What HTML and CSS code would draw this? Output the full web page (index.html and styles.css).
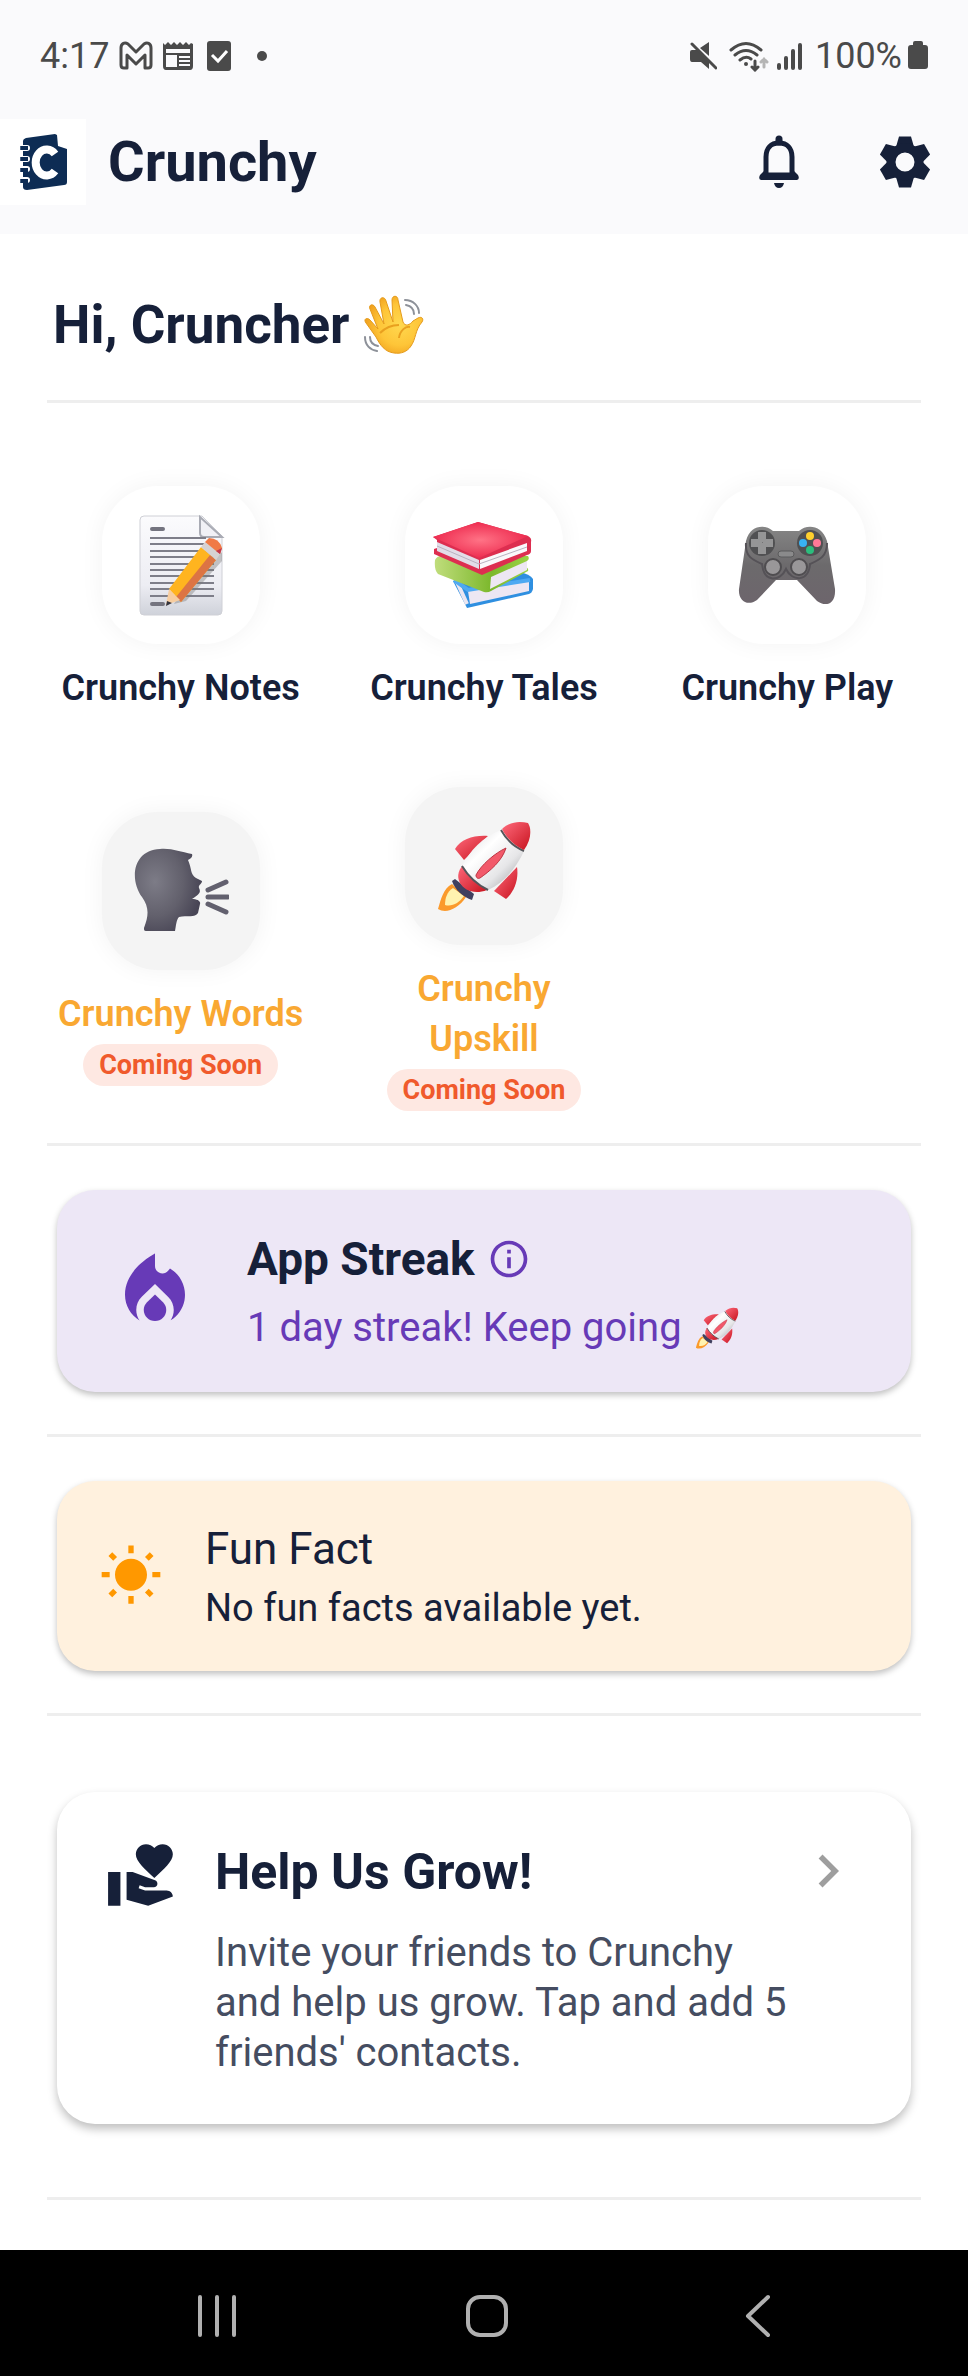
FILE: index.html
```
<!DOCTYPE html>
<html lang="en">

<head>
    <meta charset="UTF-8">
    <meta name="viewport" content="width=device-width, initial-scale=1.0">
    <title>Crunchy</title>
    <link rel="stylesheet" href="styles.css">
</head>

<body>
    <!-- shared drawings -->
    <svg class="defs" aria-hidden="true">
        <defs>
            <linearGradient id="body" x1="0" y1="0" x2="1" y2="1">
                <stop offset="0" stop-color="#d5d5d8" />
                <stop offset=".35" stop-color="#fff" />
                <stop offset=".65" stop-color="#e6e6e8" />
                <stop offset="1" stop-color="#8f9094" />
            </linearGradient>
            <linearGradient id="red" x1="0" y1="0" x2="1" y2="1">
                <stop offset="0" stop-color="#ff6a7c" />
                <stop offset="1" stop-color="#c8141f" />
            </linearGradient>
        </defs>
        <symbol id="rocket" viewBox="0 -3 96 96">
            <path d="M16 63c-9 5-11 15-14 25 8 5 20 0 28-12z" fill="#fb9a2c" />
            <path d="M17 67c-6 4-8 10-8 17 7 2 14-2 19-9z" fill="#fff3b0" />
            <path d="M16 60l3-2 19 15-2 6C27 76 19 69 16 60z" fill="#40405f" />
            <path d="M52 15C38 14 25 18 19 28l9 11z" fill="url(#red)" />
            <path d="M81 46c2 13-3 25-11 32L58 70z" fill="url(#red)" />
            <path d="M28 43c-8 8-6 15-4 19 4 7 14 12 27 7z" fill="url(#red)" />
            <path d="M65 9C46 16 34 30 26 45c6 10 14 18 26 24 17-8 28-22 36-39z" fill="url(#body)" />
            <path d="M26 45c6 10 14 18 26 24M65 9c5 9 13 17 23 21" fill="none" stroke="#55565b" stroke-width="2" />
            <path d="M66 8c9-8 18-8 26-6 4 6 3 18-4 27-9-4-17-11-22-21z" fill="url(#red)" />
            <path d="M70 27C59 32 45 44 40 54c0 3 2 4 4 3 10-7 22-17 26-30z" fill="#f2596a" stroke="#bd3442" />
        </symbol>
    </svg>

    <!-- status bar -->
    <div class="status">
        <div class="status-side">
            <span class="status-text">4:17</span>
            <svg width="34" height="32" viewBox="0 0 34 32" aria-hidden="true">
                <path d="M2 8c0-5 4-6 7-4l8 8 8-8c3-2 7-1 7 4v17q0 3-3 3h-3V15l-9 9-9-9v13H5q-3 0-3-3z" fill="none" stroke="#4a4a4a" stroke-width="3" stroke-linejoin="round" />
            </svg>
            <svg width="30" height="32" viewBox="0 0 30 32" aria-hidden="true">
                <path d="M0 3l2 2 3-3 3 3 3-3 3 3 3-3 3 3 3-3 3 3 2-2 2 1v22q0 4-3 4H3q-3 0-3-4z" fill="#4a4a4a" />
                <path d="M3 9h24v4H3zM3 15h11v12H3zM16 16h11v2H16zM16 20h11v2H16zM16 24h11v2H16z" fill="#fafafc" />
            </svg>
            <svg class="task" width="24" height="32" viewBox="0 0 24 32" aria-hidden="true">
                <rect y="1" width="24" height="30" rx="3" fill="#4a4a4a" />
                <path d="M5 15l6 6 9-10" fill="none" stroke="#fff" stroke-width="3" />
            </svg>
            <span class="dot"></span>
        </div>
        <div class="status-side right">
            <svg width="28" height="30" viewBox="0 0 28 30" aria-hidden="true">
                <path d="M1 11q0-2 2-2h5L20 20v8l-8-7H3q-2 0-2-3zM11 7l9-6v14z" fill="#4a4a4a" />
                <path d="M3 3l24 24" stroke="#4a4a4a" stroke-width="3" stroke-linecap="round" />
            </svg>
            <svg width="40" height="32" viewBox="0 0 40 32" aria-hidden="true">
                <g fill="none" stroke="#4a4a4a" stroke-width="3" stroke-linecap="round">
                    <path d="M2 10q15-13 30 0M6 15q11-9 22 0M11 20q6-5 11-1" />
                    <path d="M26 21v9m-3-3l3 3 3-3" />
                    <path d="M35 27v-8m-3 3l3-3 3 3" stroke="#b5b5b5" />
                </g>
                <circle cx="17" cy="24" r="2" fill="#4a4a4a" />
            </svg>
            <svg class="signal" width="26" height="28" viewBox="0 0 26 28" aria-hidden="true">
                <path d="M2 23v3M9 16v10M16 9v17M23 3v23" stroke="#4a4a4a" stroke-width="4" stroke-linecap="round" />
            </svg>
            <span class="status-text">100%</span>
            <svg class="battery" width="20" height="30" viewBox="0 0 20 30" aria-hidden="true">
                <path d="M5 2q0-2 2-2h6q2 0 2 2v2h2q3 0 3 3v18q0 3-3 3H3q-3 0-3-3V7q0-3 3-3h2z" fill="#4a4a4a" />
            </svg>
        </div>
    </div>

    <!-- app bar -->
    <header class="appbar">
        <svg class="logo" viewBox="0 0 86 86" role="img" aria-label="Crunchy logo">
            <path d="M23 22q0-2 3-3l29-4 2 1 1 11 9 3v33q0 3-3 3l-37 5q-4 0-4-3z" fill="#0d2c54" />
            <path d="M55 35a11 13 0 1 0 0 17" fill="none" stroke="#fff" stroke-width="8" />
            <g fill="none" stroke="#fff" stroke-width="6" stroke-linecap="round">
                <path d="M21 29h6M21 40h6M21 50h6M21 61h6" />
            </g>
            <g fill="none" stroke="#0d2c54" stroke-width="2" stroke-linecap="round">
                <path d="M21 28h6v2h-6M21 39h6v2h-6M21 50h6v2h-6M21 61h6v2h-6" />
            </g>
        </svg>
        <h1>Crunchy</h1>
        <button class="icon-btn" aria-label="Notifications">
            <svg width="52" height="54" viewBox="0 0 52 54">
                <path d="M13 40V22c0-9 5-14 13-14s13 5 13 14v18z" fill="none" stroke="#162039" stroke-width="5" />
                <path d="M26 4v3" stroke="#162039" stroke-width="7" stroke-linecap="round" />
                <path d="M11 36l-4 4q-2 4 1 5h36q3-1 1-5l-4-4v4H11z" fill="#162039" />
                <path d="M21 48h10q-1 5-5 5t-5-5z" fill="#162039" />
            </svg>
        </button>
        <button class="icon-btn" aria-label="Settings">
            <svg width="52" height="52" viewBox="-26 -26 52 52">
                <g fill="#162039">
                    <path id="tooth" d="M-9-15l3-10.500h12L9-15z" />
                    <use href="#tooth" transform="rotate(60)" />
                    <use href="#tooth" transform="rotate(120)" />
                    <use href="#tooth" transform="rotate(180)" />
                    <use href="#tooth" transform="rotate(240)" />
                    <use href="#tooth" transform="rotate(300)" />
                </g>
                <circle r="14" fill="none" stroke="#162039" stroke-width="9" />
            </svg>
        </button>
    </header>

    <main>
        <h2 class="greeting">Hi, Cruncher
            <svg width="62" height="62" viewBox="0 0 62 62" role="img" aria-label="waving hand">
                <defs>
                    <radialGradient id="hand" cx=".6" cy=".5" r=".6">
                        <stop offset="0" stop-color="#ffd84f" />
                        <stop offset=".6" stop-color="#fec538" />
                        <stop offset="1" stop-color="#f0a01e" />
                    </radialGradient>
                </defs>
                <path d="M31 59C22 58 17 51 13 43L3 29c-3-4 1-6 4-3l8 9L7 15c-2-4 3-6 5-2l9 17-4-22c-1-5 5-6 6-1l7 21-1-22c0-5 6-5 6 0l5 22c2 5 7 3 10-1l5-3c4-2 6 1 4 4-7 8-6 17-11 24-4 6-10 8-17 7z" fill="url(#hand)" stroke="#e59b1c" />
                <path d="M36 44c1-8 7-12 11-11M17 39c5-5 12-8 19-8" fill="none" stroke="#e9a01f" stroke-width="2" />
                <path d="M42 6c8 0 14 6 14 13M43 11c5 1 8 4 8 9M2 43c0 8 5 13 12 14M7 43c0 5 3 8 8 9" fill="none" stroke="#8d9199" stroke-width="2" stroke-linecap="round" />
            </svg>
        </h2>
        <hr>

        <!-- feature tiles -->
        <nav class="tiles" aria-label="Features">
            <a class="tile" href="#notes">
                <span class="tile-box">
                    <svg width="96" height="104" viewBox="-2 -1 96 104" aria-hidden="true">
                        <defs>
                            <linearGradient id="paper" x1="0" y1="0" x2="0" y2="1">
                                <stop offset="0" stop-color="#fbfbfd" />
                                <stop offset=".7" stop-color="#ededf3" />
                                <stop offset="1" stop-color="#cfd2da" />
                            </linearGradient>
                        </defs>
                        <path d="M9 2h58l20 20v75q0 4-4 4H9q-4 0-4-4V6q0-4 4-4z" fill="url(#paper)" stroke="#cfd0d6" />
                        <path d="M65 3v16q0 4 4 4h18z" fill="#f1f1f6" stroke="#a9abb4" stroke-width="2" />
                        <path d="M17 15h11M17 90h11" stroke="#74747f" stroke-width="4" stroke-linecap="round" />
                        <path d="M15 24h56M15 30h54M15 37h50M15 43h64M15 50h64M15 56h64M15 62h64M15 69h64M15 75h64M15 82h64" stroke="#7e7e89" stroke-width="2" />
                        <path d="M73 31l14 8v8L51 87l-12 3z" fill="#777" opacity=".4" />
                        <path d="M66 33l15 13-35 42-12-13z" fill="#ffb41f" />
                        <path d="M81 46L46 88l-5-5 34-42z" fill="#dc7444" />
                        <path d="M34 75l-3 16 14-5z" fill="#f7cda0" />
                        <path d="M32 87l-1 5 6-3z" fill="#34343e" />
                        <path d="M70 28l15 12-4 6-15-13z" fill="#d6d2d3" />
                        <path d="M74 24q10 0 13 10l-2 6-15-12z" fill="#f07a46" />
                        <path d="M87 34l-2 6-4-3z" fill="#c4374d" />
                    </svg>
                </span>
                <span class="tile-label">Crunchy Notes</span>
            </a>
            <a class="tile" href="#tales">
                <span class="tile-box">
                    <svg width="104" height="104" viewBox="0 -5 104 104" aria-hidden="true">
                        <defs>
                            <radialGradient id="cover">
                                <stop offset="0" stop-color="#ff7386" />
                                <stop offset="1" stop-color="#ee2c50" />
                            </radialGradient>
                            <linearGradient id="green">
                                <stop offset="0" stop-color="#c0dd7c" />
                                <stop offset=".6" stop-color="#7cb82c" />
                                <stop offset="1" stop-color="#9bd245" />
                            </linearGradient>
                        </defs>
                        <path d="M21 63l66-9q11 2 14 7v10q-1 4-4 5l-62 14z" fill="#2f8fe0" />
                        <path d="M36 73l61-10v10L38 86z" fill="#ede7f3" />
                        <path d="M25 64l10 22" stroke="#eae6f1" stroke-width="4" />
                        <path d="M22 62l14 10 62-10" fill="none" stroke="#4ea9f2" stroke-width="4" />
                        <path d="M3 42q2-4 6-4l87 0q2 3-1 5l-2 6q4 1 3 4L59 73q-3 2-7 1L6 56q-4-4-3-14z" fill="url(#green)" />
                        <path d="M59 59l36-16v9L58 71z" fill="#ede7f3" />
                        <path d="M1 19L46 4l50 14q4 2 3 6v9q0 3-4 4L50 57 2 36v-5l3-1v-8z" fill="#dd2e50" />
                        <path d="M5 24l42 18v9L5 33z" fill="#e2dce7" />
                        <path d="M48 42l47-17v8L48 51z" fill="#faf8fb" />
                        <path d="M5 28l42 18 48-17" fill="none" stroke="#b9b2c0" />
                        <path d="M1 19L46 4l50 14-49 22z" fill="url(#cover)" />
                    </svg>
                </span>
                <span class="tile-label">Crunchy Tales</span>
            </a>
            <a class="tile" href="#play">
                <span class="tile-box">
                    <svg width="100" height="84" viewBox="0 0 100 84" aria-hidden="true">
                        <defs>
                            <linearGradient id="pad" x1="0" y1="0" x2="0" y2="1">
                                <stop offset="0" stop-color="#858585" />
                                <stop offset=".5" stop-color="#6c6a6c" />
                                <stop offset="1" stop-color="#6d656c" />
                            </linearGradient>
                        </defs>
                        <path d="M9 18C13 2 28 1 36 8h26c8-7 23-6 28 10l8 48c1 16-10 18-18 12L60 57H39L20 77C10 84 1 77 2 66z" fill="url(#pad)" />
                        <path d="M9 20c-1 14 7 17 16 21 2 19 18 18 24 5 6 13 23 13 24-5 9-4 17-7 17-21" fill="none" stroke="#555257" stroke-width="2" />
                        <circle cx="25" cy="20" r="13" fill="#505052" />
                        <circle cx="73" cy="20" r="13" fill="#505052" />
                        <path d="M21 9h8v7l-4 4-4-4zM36 16v8h-7l-4-4 4-4zM29 31h-8v-7l4-4 4 4zM14 24v-8h7l4 4-4 4z" fill="#959596" />
                        <circle cx="73" cy="13" r="4" fill="#ffd02d" />
                        <circle cx="66" cy="20" r="4" fill="#38b2f2" />
                        <circle cx="80" cy="20" r="4" fill="#ff7998" />
                        <circle cx="73" cy="27" r="4" fill="#2cbd7d" />
                        <rect x="41" y="28" width="16" height="6" rx="3" fill="#8a8a8b" stroke="#5b5b5c" />
                        <circle cx="36" cy="44" r="8" fill="#999799" stroke="#4f4d50" stroke-width="2" />
                        <circle cx="62" cy="44" r="8" fill="#999799" stroke="#4f4d50" stroke-width="2" />
                    </svg>
                </span>
                <span class="tile-label">Crunchy Play</span>
            </a>
            <a class="tile soon" href="#words">
                <span class="tile-box">
                    <svg width="96" height="88" viewBox="0 0 96 88" aria-hidden="true">
                        <defs>
                            <radialGradient id="head" cx=".3" cy=".4" r=".7">
                                <stop offset="0" stop-color="#7d7c87" />
                                <stop offset=".6" stop-color="#62606c" />
                                <stop offset="1" stop-color="#484555" />
                            </radialGradient>
                        </defs>
                        <path d="M13 84c-2 0-2-1-2-3 5-13 5-21-2-31C-4 32 0 3 27 2c12-1 20 3 32 5 1 3-1 4-4 6 4 9 2 14 8 18l6 3c0 3-4 4-3 7 2 4 1 6-7 11 5 0 9 2 8 5l-2 9c-3 5-11 2-19 4-3 3-3 10-4 14z" fill="url(#head)" />
                        <path d="M75 43l18-8M75 50h20M75 57l18 8" stroke="#62606e" stroke-width="5" stroke-linecap="round" />
                    </svg>
                </span>
                <span class="tile-label">Crunchy Words</span>
                <span class="badge">Coming Soon</span>
            </a>
            <a class="tile soon" href="#upskill">
                <span class="tile-box">
                    <svg width="96" height="96" aria-hidden="true"><use href="#rocket" /></svg>
                </span>
                <span class="tile-label">Crunchy<br>Upskill</span>
                <span class="badge">Coming Soon</span>
            </a>
        </nav>
        <hr>

        <section class="card streak">
            <svg width="90" height="90" viewBox="0 0 24 24" fill="#673ab7" aria-hidden="true">
                <path d="M12 12.900l-2.130 2.090C9.310 15.550 9 16.280 9 17.060 9 18.680 10.350 20 12 20s3-1.320 3-2.940c0-.78-.31-1.520-.87-2.070L12 12.900z" />
                <path d="M16 6l-.44.55C14.380 8.020 12 7.190 12 5.300V2S4 6 4 13c0 2.920 1.560 5.470 3.890 6.860-.56-.79-.89-1.760-.89-2.800 0-1.320.52-2.560 1.470-3.500L12 10.100l3.530 3.470c.95.93 1.470 2.170 1.470 3.500 0 1.020-.31 1.960-.85 2.750 1.890-1.150 3.290-3.060 3.710-5.300.66-3.550-1.070-6.900-3.860-8.520z" />
            </svg>
            <div class="card-text">
                <h3>App Streak
                    <button class="info" aria-label="About the streak">
                        <svg width="44" height="44" viewBox="0 0 24 24" fill="#673ab7">
                            <path d="M11 7h2v2h-2zm0 4h2v6h-2zm1-9C6.480 2 2 6.480 2 12s4.480 10 10 10 10-4.480 10-10S17.520 2 12 2zm0 18c-4.410 0-8-3.590-8-8s3.590-8 8-8 8 3.590 8 8-3.590 8-8 8z" />
                        </svg>
                    </button>
                </h3>
                <p>1 day streak! Keep going
                    <svg width="46" height="44" role="img" aria-label="rocket"><use href="#rocket" /></svg>
                </p>
            </div>
        </section>
        <hr>

        <section class="card fact">
            <svg width="64" height="64" viewBox="0 0 24 24" fill="#ff9800" aria-hidden="true">
                <path d="M6.760 4.840l-1.800-1.790-1.410 1.410 1.790 1.790 1.420-1.410zM4 10.500H1v2h3v-2zm9-9.950h-2V3.500h2V.55zm7.450 3.910l-1.410-1.410-1.790 1.790 1.410 1.410 1.790-1.790zm-3.210 13.700l1.790 1.800 1.410-1.410-1.800-1.790-1.400 1.400zM20 10.500v2h3v-2h-3zm-8-5c-3.310 0-6 2.690-6 6s2.690 6 6 6 6-2.690 6-6-2.690-6-6-6zm-1 16.950h2V19.500h-2v2.950zm-7.450-3.910l1.410 1.410 1.790-1.800-1.410-1.410-1.790 1.800z" />
            </svg>
            <div class="card-text">
                <h3>Fun Fact</h3>
                <p>No fun facts available yet.</p>
            </div>
        </section>
        <hr>

        <a class="card grow" href="#invite">
            <svg width="74" height="74" viewBox="0 0 24 24" fill="#162039" aria-hidden="true">
                <path d="M1 11h4v11H1zm15-7.750C16.650 2.490 17.660 2 18.700 2 20.550 2 22 3.450 22 5.300c0 2.270-2.910 4.900-6 7.700-3.090-2.810-6-5.440-6-7.700C10 3.450 11.450 2 13.300 2c1.040 0 2.050.49 2.700 1.250zM20 17h-7l-2.090-.73.33-.94L13 16h2.820c.65 0 1.180-.53 1.180-1.180 0-.49-.31-.93-.77-1.110L8.970 11H7v9.020L14 22l8.010-3c-.01-1.100-.9-2-2.010-2z" />
            </svg>
            <div class="card-text">
                <h3>Help Us Grow!</h3>
                <p>Invite your friends to Crunchy and help us grow. Tap and add 5 friends' contacts.</p>
            </div>
            <svg width="66" height="66" viewBox="0 0 24 24" fill="#9e9e9e" aria-hidden="true">
                <path d="M10 6L8.590 7.410 13.170 12l-4.580 4.590L10 18l6-6z" />
            </svg>
        </a>
        <hr>
    </main>

    <!-- system navigation -->
    <footer class="sysnav">
        <button aria-label="Recent apps">
            <svg width="44" height="44" viewBox="0 0 44 44"><path d="M5 3v38M22 3v38M39 3v38" /></svg>
        </button>
        <button aria-label="Home">
            <svg width="44" height="44" viewBox="0 0 44 44"><rect x="3" y="3" width="38" height="38" rx="12" /></svg>
        </button>
        <button aria-label="Back">
            <svg width="44" height="44" viewBox="0 0 44 44"><path d="M33 3L13 22l20 19" /></svg>
        </button>
    </footer>
</body>

</html>
```
FILE: styles.css
```
* {
    box-sizing: border-box;
    margin: 0;
    padding: 0;
}

body {
    min-height: 100vh;
    display: flex;
    flex-direction: column;
    background-color: #fff;
    color: #162039;
    font-family: Roboto, "Liberation Sans", sans-serif;
}

button {
    border: none;
    background: none;
    font: inherit;
    cursor: pointer;
}

a {
    color: inherit;
    text-decoration: none;
}

svg {
    display: block;
    flex-shrink: 0;
}

.defs {
    position: absolute;
    width: 0;
    height: 0;
}

/* status bar */
.status {
    display: flex;
    justify-content: space-between;
    height: 112px;
    padding: 0 40px;
    background-color: #fafafc;
    color: #4a4a4a;
}

.status-side {
    display: flex;
    align-items: center;
    gap: 10px;
}

.status-side.right {
    gap: 12px;
}

.status-text {
    font-size: 36px;
    line-height: 40px;
}

.task {
    margin-left: 4px;
}

.dot {
    width: 10px;
    height: 10px;
    margin-left: 16px;
    border-radius: 50%;
    background-color: #4a4a4a;
}

.signal {
    margin-left: -4px;
}

.battery {
    margin-left: -6px;
}

/* app bar */
.appbar {
    display: flex;
    align-items: center;
    height: 122px;
    padding: 0 37px 22px 0;
    background-color: #fafafc;
}

.logo {
    width: 86px;
    height: 86px;
    background-color: #fff;
}

.appbar h1 {
    flex: 1;
    margin-left: 22px;
    font-size: 56px;
    line-height: 64px;
}

.icon-btn {
    margin-left: 74px;
}

/* content */
main {
    flex: 1;
    padding: 0 47px;
}

hr {
    height: 3px;
    border: none;
    background-color: #eee;
}

.greeting {
    display: flex;
    align-items: center;
    gap: 14px;
    padding: 60px 6px 44px;
    font-size: 53px;
    line-height: 62px;
}

.tiles {
    display: grid;
    grid-template-columns: repeat(3, 1fr);
    grid-auto-rows: 324px;
    gap: 26px 36px;
    padding: 34px 0 32px;
}

.tile {
    display: flex;
    flex-direction: column;
    align-items: center;
    justify-content: center;
}

.tile-box {
    display: flex;
    align-items: center;
    justify-content: center;
    width: 158px;
    height: 158px;
    margin-bottom: 19px;
    border-radius: 56px;
    background-color: #fff;
    box-shadow: 0 0 24px rgba(0, 0, 0, .05);
}

.tile-label {
    font-size: 36px;
    font-weight: 600;
    line-height: 50px;
    text-align: center;
}

.soon .tile-box {
    background-color: #f4f4f4;
}

.soon .tile-label {
    color: #f9a832;
}

.badge {
    margin-top: 5px;
    padding: 0 16px;
    border-radius: 21px;
    background-color: #fee8e2;
    color: #f05a2c;
    font-size: 27px;
    font-weight: 700;
    line-height: 42px;
}

/* cards */
.card {
    display: flex;
    align-items: center;
    margin: 44px 10px 42px;
    border-radius: 38px;
    box-shadow: 0 3px 6px rgba(0, 0, 0, .25);
}

.card-text {
    flex: 1;
}

.card h3 {
    display: flex;
    align-items: center;
    gap: 12px;
}

.card p {
    display: flex;
    align-items: center;
    gap: 12px;
    line-height: 50px;
}

.streak {
    gap: 47px;
    padding: 39px 53px;
    background-color: #ede7f6;
}

.streak h3 {
    font-size: 46px;
    line-height: 60px;
}

.streak p {
    margin-top: 14px;
    color: #673ab7;
    font-size: 40px;
}

.fact {
    gap: 42px;
    padding: 38px 42px;
    background-color: #fff1de;
}

.fact h3 {
    font-size: 44px;
    font-weight: 400;
    line-height: 60px;
}

.fact p {
    margin-top: 4px;
    font-size: 38px;
}

.grow {
    align-items: flex-start;
    margin: 76px 10px 73px;
    padding: 46px 50px 46px 48px;
    background-color: #fff;
    box-shadow: 0 5px 10px rgba(0, 0, 0, .25);
}

.grow .card-text {
    margin: 0 6px 0 36px;
}

.grow h3 {
    font-size: 50px;
    line-height: 68px;
}

.grow p {
    display: block;
    margin-top: 22px;
    color: #454d61;
    font-size: 40px;
}

.info {
    border-radius: 50%;
}

/* system navigation */
.sysnav {
    display: flex;
    align-items: center;
    justify-content: space-around;
    height: 126px;
    padding: 6px 76px 0 82px;
    background-color: #000;
}

.sysnav svg {
    fill: none;
    stroke: #b0b0b0;
    stroke-width: 4;
    stroke-linecap: round;
    stroke-linejoin: round;
}
```
